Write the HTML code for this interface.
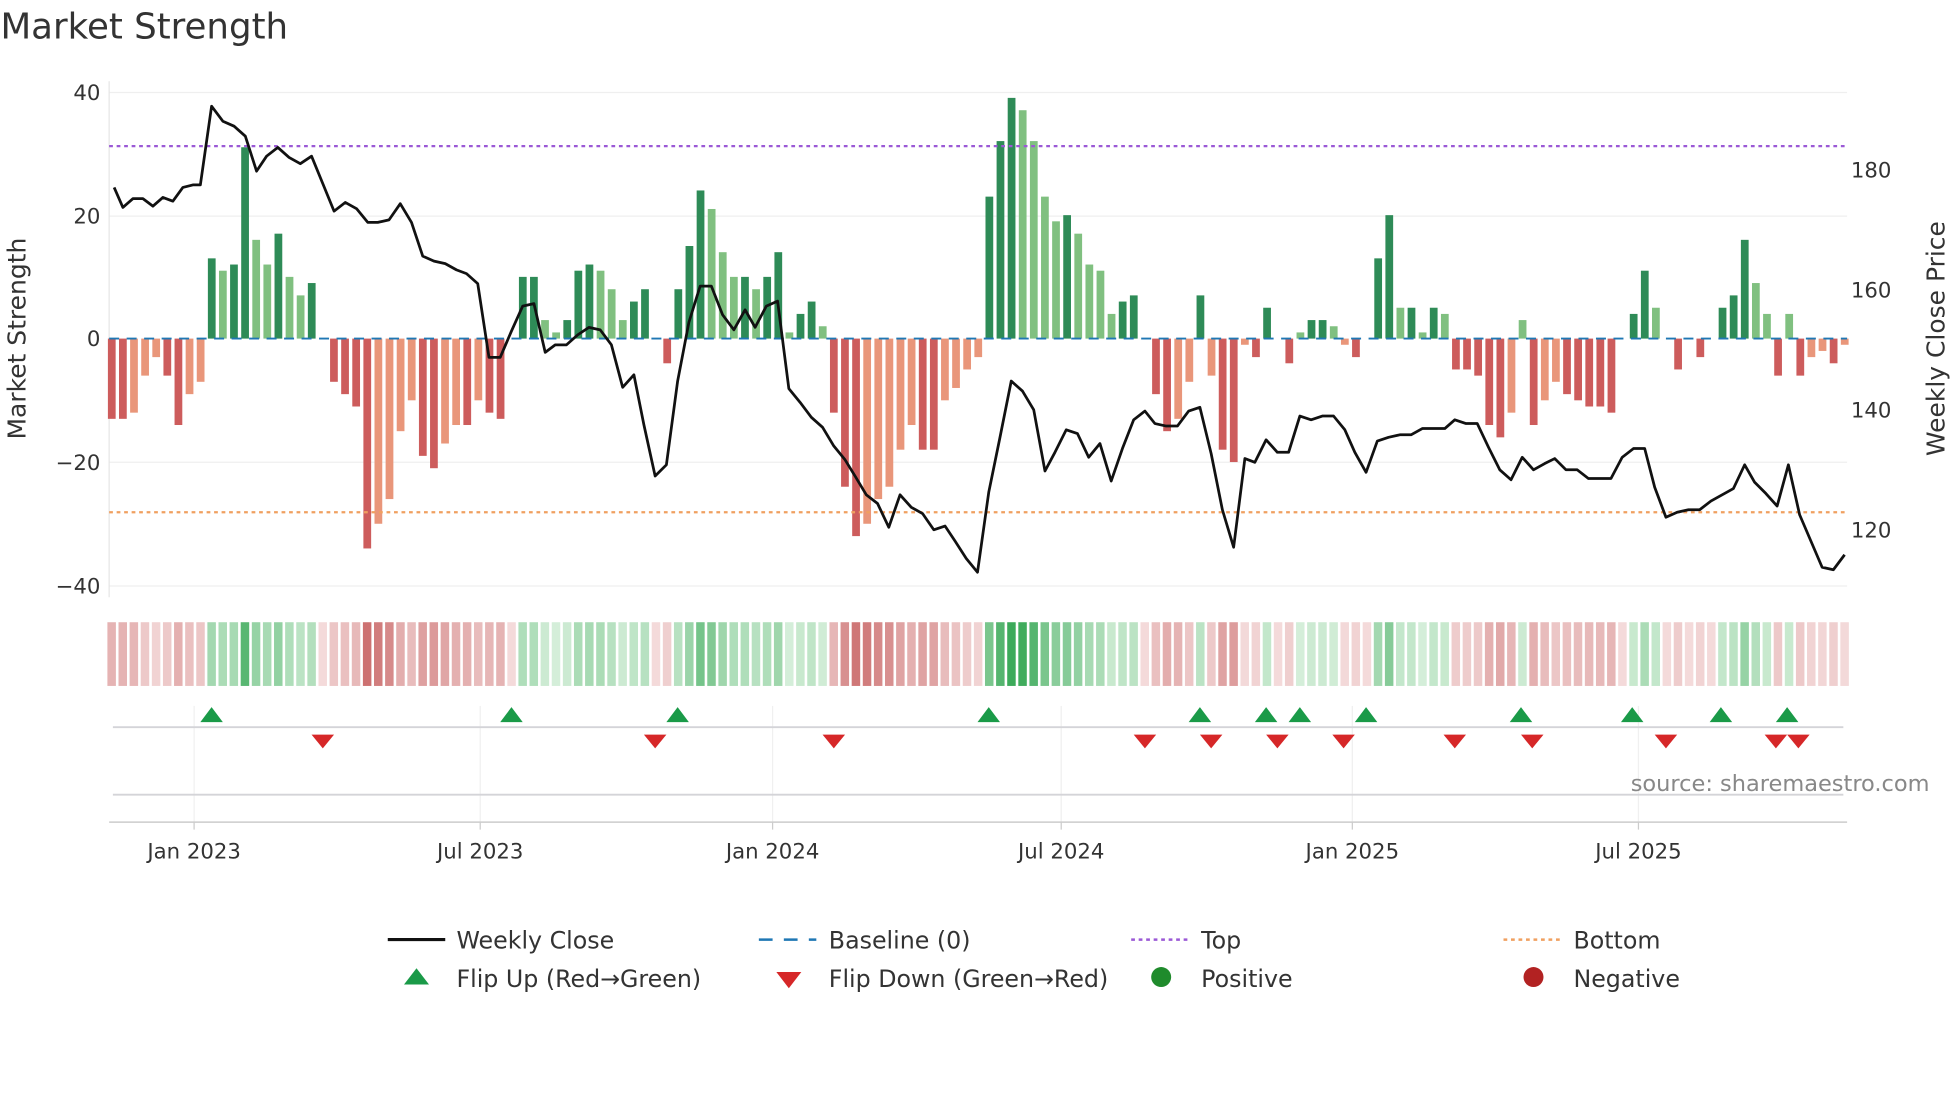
<!DOCTYPE html>
<html><head><meta charset="utf-8"><style>
html,body{margin:0;padding:0;background:#fff;width:1960px;height:1102px;overflow:hidden}
svg{display:block}
text{font-family:"DejaVu Sans","Liberation Sans",sans-serif}
</style></head><body>
<svg id="s" width="1960" height="1102" viewBox="0 0 1568 882" xmlns="http://www.w3.org/2000/svg">
<rect width="1568" height="882" fill="#fff"/>
<text x="0" y="31" font-size="28.5" fill="#333">Market Strength</text>
<g stroke="#efefef" stroke-width="1">
<line x1="87" y1="74" x2="1478" y2="74"/><line x1="87" y1="173" x2="1478" y2="173"/><line x1="87" y1="370" x2="1478" y2="370"/><line x1="87" y1="469" x2="1478" y2="469"/>
</g>
<line x1="87" y1="65" x2="87" y2="478" stroke="#e6e6e6"/>
<g font-size="17" fill="#333" text-anchor="end">
<text x="80" y="80">40</text><text x="80" y="179">20</text><text x="80" y="277">0</text><text x="80" y="376">−20</text><text x="80" y="475">−40</text>
</g>
<g font-size="17" fill="#333">
<text x="1481" y="142">180</text><text x="1481" y="238">160</text><text x="1481" y="334">140</text><text x="1481" y="430">120</text>
</g>
<text transform="translate(20,271) rotate(-90)" font-size="20" fill="#333" text-anchor="middle">Market Strength</text>
<text transform="translate(1556,271) rotate(-90)" font-size="20" fill="#333" text-anchor="middle">Weekly Close Price</text>
<g id="bars"></g>
<line x1="87" y1="271" x2="1478" y2="271" stroke="#1f77b4" stroke-width="1.5" stroke-dasharray="8,6"/>
<line x1="87" y1="117" x2="1478" y2="117" stroke="#9b59d6" stroke-width="1.8" stroke-dasharray="3,3"/>
<line x1="87" y1="410" x2="1478" y2="410" stroke="#f0a060" stroke-width="1.8" stroke-dasharray="3,3"/>
<polyline id="price" fill="none" stroke="#111" stroke-width="2.2" stroke-linejoin="round"/>
<g id="heat"></g>
<g stroke="#f0f0f0"><line x1="155" y1="565" x2="155" y2="658"/><line x1="384" y1="565" x2="384" y2="658"/><line x1="618" y1="565" x2="618" y2="658"/><line x1="849" y1="565" x2="849" y2="658"/><line x1="1082" y1="565" x2="1082" y2="658"/><line x1="1311" y1="565" x2="1311" y2="658"/></g>
<line x1="90" y1="582" x2="1475" y2="582" stroke="#d4d4d8" stroke-width="1.5"/>
<line x1="90" y1="636" x2="1475" y2="636" stroke="#d4d4d8" stroke-width="1.5"/>
<line x1="87" y1="658" x2="1478" y2="658" stroke="#ccc" stroke-width="1.2"/>
<g id="mk"></g>
<text x="1544" y="633" font-size="18" fill="#888" text-anchor="end">source: sharemaestro.com</text>
<g font-size="17" fill="#333" text-anchor="middle">
<text x="155" y="687">Jan 2023</text><text x="384" y="687">Jul 2023</text><text x="618" y="687">Jan 2024</text><text x="849" y="687">Jul 2024</text><text x="1082" y="687">Jan 2025</text><text x="1311" y="687">Jul 2025</text>
</g>
<g stroke="#ccc"><line x1="155" y1="658" x2="155" y2="664"/><line x1="384" y1="658" x2="384" y2="664"/><line x1="618" y1="658" x2="618" y2="664"/><line x1="849" y1="658" x2="849" y2="664"/><line x1="1082" y1="658" x2="1082" y2="664"/><line x1="1311" y1="658" x2="1311" y2="664"/></g>
<g font-size="19" fill="#333">
<line x1="310" y1="752" x2="356" y2="752" stroke="#111" stroke-width="2.5"/><text x="365" y="759">Weekly Close</text>
<line x1="607" y1="752" x2="653" y2="752" stroke="#1f77b4" stroke-width="2" stroke-dasharray="11,9"/><text x="663" y="759">Baseline (0)</text>
<line x1="905" y1="752" x2="951" y2="752" stroke="#9b59d6" stroke-width="2" stroke-dasharray="3,3"/><text x="961" y="759">Top</text>
<line x1="1203" y1="752" x2="1249" y2="752" stroke="#f0a060" stroke-width="2" stroke-dasharray="3,3"/><text x="1259" y="759">Bottom</text>
<polygon points="323,788 343,788 333,775" fill="#1a9a48"/><text x="365" y="790">Flip Up (Red→Green)</text>
<polygon points="621,778 641,778 631,791" fill="#d62728"/><text x="663" y="790">Flip Down (Green→Red)</text>
<circle cx="929" cy="782" r="8" fill="#1f8b2c"/><text x="961" y="790">Positive</text>
<circle cx="1227" cy="782" r="8" fill="#b22222"/><text x="1259" y="790">Negative</text>
</g>
</svg>
<script>
var v=[-13,-13,-12,-6,-3,-6,-14,-9,-7,13,11,12,31,16,12,17,10,7,9,0,-7,-9,-11,-34,-30,-26,-15,-10,-19,-21,-17,-14,-14,-10,-12,-13,0,10,10,3,1,3,11,12,11,8,3,6,8,0,-4,8,15,24,21,14,10,10,8,10,14,1,4,6,2,-12,-24,-32,-30,-26,-24,-18,-14,-18,-18,-10,-8,-5,-3,23,32,39,37,32,23,19,20,17,12,11,4,6,7,0,-9,-15,-13,-7,7,-6,-18,-20,-1,-3,5,0,-4,1,3,3,2,-1,-3,0,13,20,5,5,1,5,4,-5,-5,-6,-14,-16,-12,3,-14,-10,-7,-9,-10,-11,-11,-12,0,4,11,5,0,-5,0,-3,0,5,7,16,9,4,-6,4,-6,-3,-2,-4,-1];
var NS="http://www.w3.org/2000/svg";
function el(p,t,a){var e=document.createElementNS(NS,t);for(var k in a)e.setAttribute(k,a[k]);p.appendChild(e);return e;}
var bars=document.getElementById('bars'),heat=document.getElementById('heat');
var n=v.length,x0=89,dx=(1476-89)/(n-1);
function mix(a,b,t){return 'rgb('+[0,1,2].map(function(i){return Math.round(a[i]+(b[i]-a[i])*t)}).join(',')+')';}
for(var i=0;i<n;i++){
 var x=x0+i*dx,val=v[i],prev=i?v[i-1]:0;
 var dark=Math.abs(val)>=Math.abs(prev);
 var col=val>=0?(dark?'#2e8b57':'#80c080'):(dark?'#cd5c5c':'#e9967a');
 var y0=271,y1=271-val*4.94;
 if(val!==0) el(bars,'rect',{x:x-3,y:Math.min(y0,y1),width:6.2,height:Math.abs(y1-y0),fill:col});
 var t=Math.min(Math.abs(val)/38,1);
 var hc=val>0?mix([216,240,220],[60,170,90],t):mix([244,220,220],[200,100,100],t);
 if(val===0)hc='#f4dada';
 el(heat,'rect',{x:x-3.4,y:498,width:6.8,height:51,fill:hc});
}
var p="91,150 98,166 106,159 114,159 122,165 130,158 138,161 146,150 154,148 160,148 169,85 178,97 187,101 196,109 205,137 213,125 222,118 231,126 240,131 249,125 258,147 267,169 276,162 285,167 294,178 302,178 311,176 320,163 329,178 338,205 347,209 356,211 365,216 373,219 382,227 391,286 400,286 409,265 418,245 427,243 436,282 444,276 453,276 462,268 471,262 480,264 489,276 498,310 507,300 515,340 524,381 533,372 542,305 551,258 560,229 569,229 578,252 587,264 596,248 604,262 613,245 622,241 631,311 640,322 649,334 658,342 667,357 676,368 684,381 693,396 702,403 711,422 720,396 729,406 738,411 747,424 756,421 764,433 773,447 782,458 791,394 800,350 809,305 818,313 827,328 836,377 844,362 853,344 862,347 871,366 880,355 889,385 898,359 907,336 916,329 924,339 933,341 942,341 951,329 960,326 969,363 978,408 987,438 996,367 1004,370 1013,352 1022,362 1031,362 1040,333 1049,336 1058,333 1067,333 1076,344 1084,362 1093,378 1102,353 1111,350 1120,348 1129,348 1138,343 1147,343 1156,343 1164,336 1173,339 1182,339 1191,358 1200,376 1209,384 1218,366 1227,376 1236,371 1244,367 1253,376 1262,376 1271,383 1280,383 1289,383 1298,366 1307,359 1316,359 1324,390 1333,414 1342,410 1351,408 1360,408 1369,401 1378,396 1387,391 1396,372 1404,386 1413,395 1422,405 1431,372 1440,412 1449,433 1458,454 1467,456 1476,444";
document.getElementById('price').setAttribute('points',p);
var mk=document.getElementById('mk');
[169,409,542,791,960,1013,1040,1093,1217,1306,1377,1430].forEach(function(x){el(mk,'polygon',{points:(x-9)+',578 '+(x+9)+',578 '+x+',566',fill:'#1a9a48'});});
[258,524,667,916,969,1022,1075,1164,1226,1333,1421,1439].forEach(function(x){el(mk,'polygon',{points:(x-9)+',588 '+(x+9)+',588 '+x+',599',fill:'#d62728'});});
</script>
</body></html>
